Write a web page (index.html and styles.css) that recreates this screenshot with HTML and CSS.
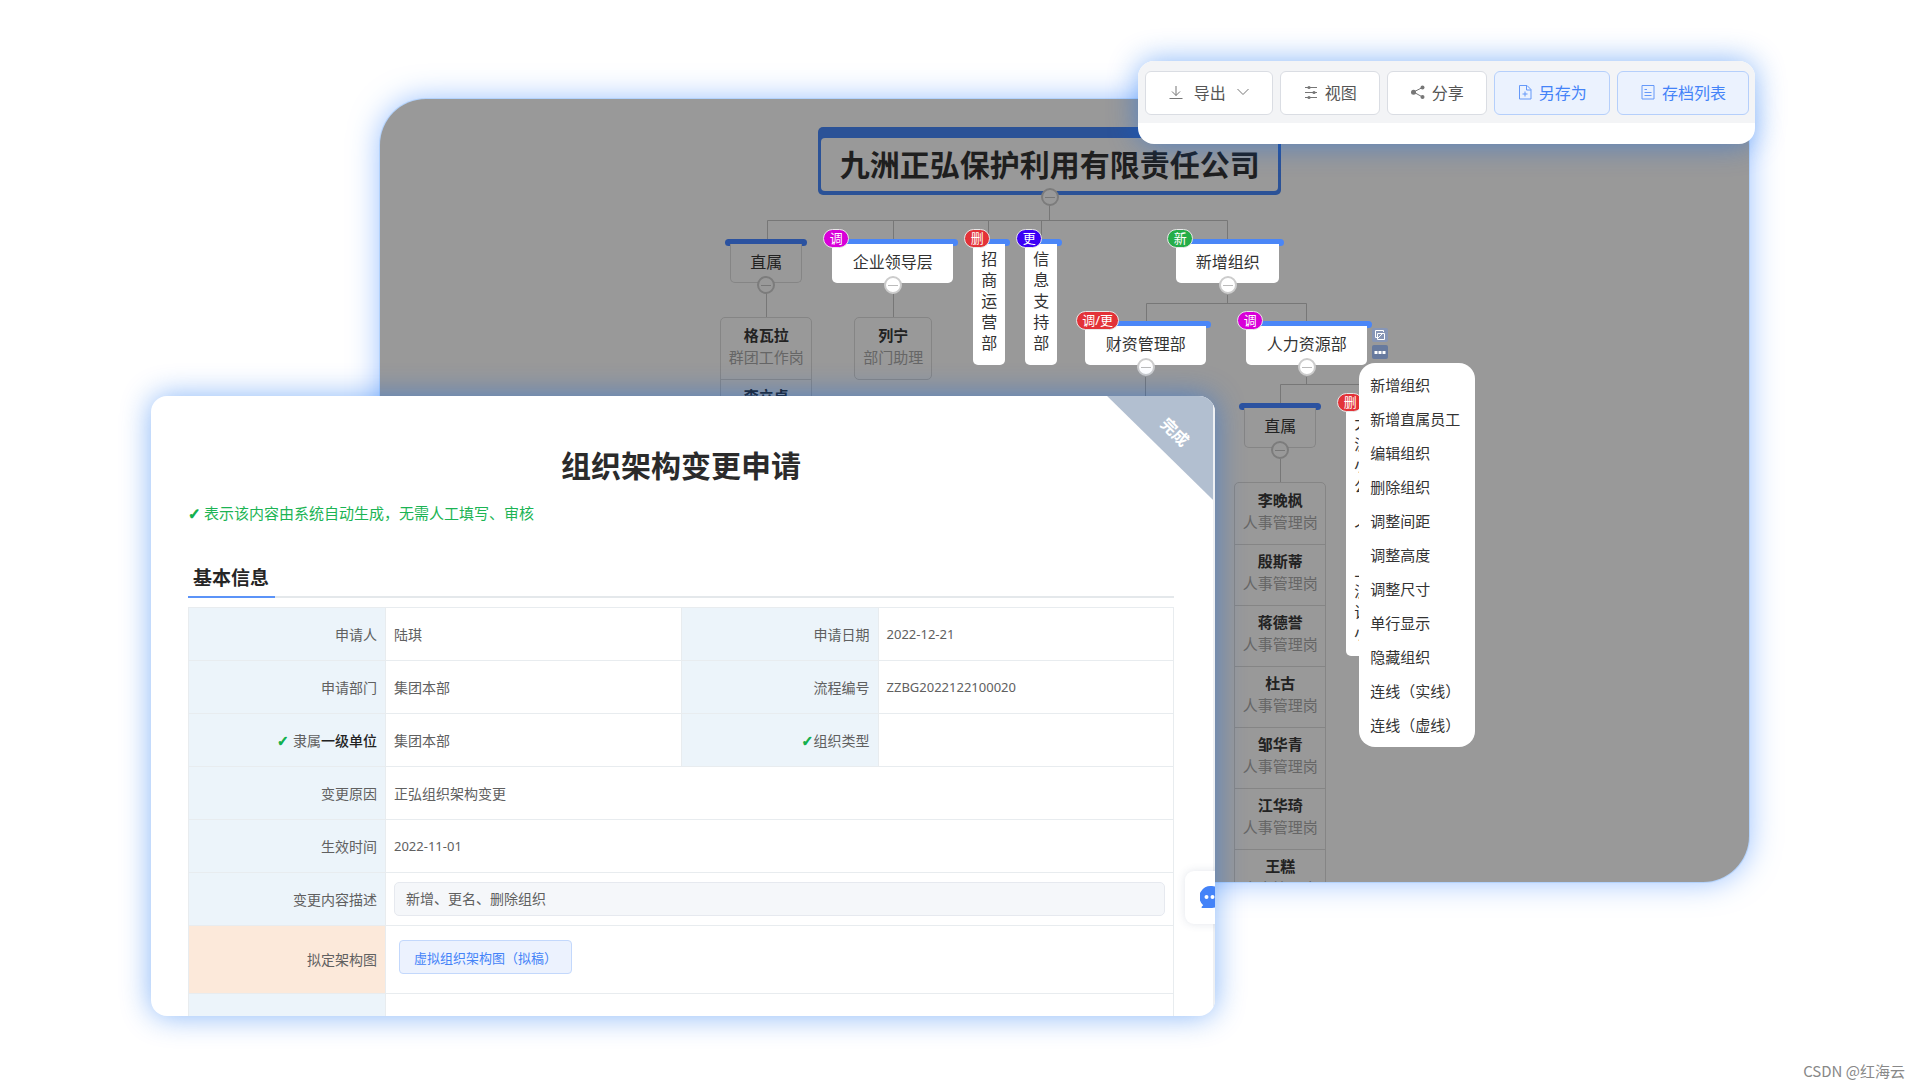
FILE: index.html
```html
<!DOCTYPE html>
<html lang="zh-CN">
<head>
<meta charset="utf-8">
<meta name="viewport" content="width=device-width, initial-scale=1">
<title>组织架构变更申请</title>
<link rel="stylesheet" href="styles.css">
</head>
<body>
<main class="stage">

  <section class="chart" aria-label="组织架构图">
    <div class="canvas">
      <svg class="wires" viewBox="0 0 1369 783" aria-hidden="true">
        <path d="M669.500 106V121M387.500 141V121.500H847.500V141M513.500 121V141M608.500 121V145M661.500 121V145M386.500 194V219M513.500 194V219M847.500 196V204M766.500 228V204.500H926.500V228M765.500 278V300M926.500 278V285M900.500 305V285.500H981M900.500 360V384"/>
      </svg>

      <div class="root"><h2>九洲正弘保护利用有限责任公司</h2><button class="toggle" aria-label="收起"></button></div>

      <div class="node dim at-direct"><div class="box">直属</div><button class="toggle" aria-label="收起"></button></div>
      <div class="node at-lead"><div class="box">企业领导层</div><span class="badge move">调</span><button class="toggle" aria-label="收起"></button></div>
      <div class="node tall at-biz"><div class="box">招商运营部</div><span class="badge del">删</span></div>
      <div class="node tall at-info"><div class="box">信息支持部</div><span class="badge ren">更</span></div>
      <div class="node at-new"><div class="box">新增组织</div><span class="badge add">新</span><button class="toggle" aria-label="收起"></button></div>
      <div class="node at-fin"><div class="box">财资管理部</div><span class="badge del">调/更</span><button class="toggle" aria-label="收起"></button></div>
      <div class="node at-hr"><div class="box">人力资源部</div><span class="badge move">调</span><button class="toggle" aria-label="收起"></button></div>
      <div class="node dim at-direct2"><div class="box">直属</div><button class="toggle" aria-label="收起"></button></div>
      <div class="node tall at-pool"><div class="box">大派小公卜个卜上派话小</div><span class="badge del">删</span></div>

      <ul class="people at-p1">
        <li><b>格瓦拉</b><span>群团工作岗</span></li>
        <li><b>李立卓</b><span>群团工作岗</span></li>
      </ul>
      <ul class="people narrow at-p2">
        <li><b>列宁</b><span>部门助理</span></li>
      </ul>
      <ul class="people at-p3">
        <li><b>李晚枫</b><span>人事管理岗</span></li>
        <li><b>殷斯蒂</b><span>人事管理岗</span></li>
        <li><b>蒋德誉</b><span>人事管理岗</span></li>
        <li><b>杜古</b><span>人事管理岗</span></li>
        <li><b>邹华青</b><span>人事管理岗</span></li>
        <li><b>江华琦</b><span>人事管理岗</span></li>
        <li><b>王糕</b><span>人事管理岗</span></li>
      </ul>

      <div class="tools">
        <button aria-label="复制"><svg viewBox="0 0 16 14"><path d="M5 9.500H3.500V2.500H11.500V4M5.500 5.500H12.500V11.500H5.500ZM6 10l4-4"/></svg></button>
        <button class="more" aria-label="更多"><svg viewBox="0 0 16 14"><path class="dots" d="M2.500 6h3v3h-3zM6.500 6h3v3h-3zM10.500 6h3v3h-3z"/></svg></button>
      </div>

      <menu class="menu">
        <li><button>新增组织</button></li>
        <li><button>新增直属员工</button></li>
        <li><button>编辑组织</button></li>
        <li><button>删除组织</button></li>
        <li><button>调整间距</button></li>
        <li><button>调整高度</button></li>
        <li><button>调整尺寸</button></li>
        <li><button>单行显示</button></li>
        <li><button>隐藏组织</button></li>
        <li><button>连线（实线）</button></li>
        <li><button>连线（虚线）</button></li>
      </menu>
    </div>
  </section>

  <section class="form">
    <h1>组织架构变更申请</h1>
    <p class="note"><span class="tick">✓</span>表示该内容由系统自动生成，无需人工填写、审核</p>
    <div class="section"><h2>基本信息</h2></div>
    <table>
      <colgroup><col class="c-label"><col class="c-value"><col class="c-label"><col class="c-value"></colgroup>
      <tbody>
        <tr><th scope="row">申请人</th><td>陆琪</td><th scope="row">申请日期</th><td class="num">2022-12-21</td></tr>
        <tr><th scope="row">申请部门</th><td>集团本部</td><th scope="row">流程编号</th><td class="num">ZZBG2022122100020</td></tr>
        <tr><th scope="row"><span class="tick">✓</span>隶属<em>一级单位</em></th><td>集团本部</td><th scope="row"><span class="tick tight">✓</span>组织类型</th><td></td></tr>
        <tr><th scope="row">变更原因</th><td colspan="3">正弘组织架构变更</td></tr>
        <tr><th scope="row">生效时间</th><td class="num" colspan="3">2022-11-01</td></tr>
        <tr><th scope="row"><label for="desc">变更内容描述</label></th><td colspan="3"><input id="desc" type="text" value="新增、更名、删除组织" readonly></td></tr>
        <tr class="plan"><th scope="row">拟定架构图</th><td colspan="3"><button class="draft">虚拟组织架构图（拟稿）</button></td></tr>
        <tr><th scope="row"></th><td colspan="3"></td></tr>
      </tbody>
    </table>
    <div class="ribbon"><span>完成</span></div>
    <button class="chat" aria-label="在线咨询">
      <svg viewBox="0 0 24 24"><path fill="#4483f8" d="M12 1a10.500 11 0 0 1 0 22H2.500c-1.200 0-1.300-1-.6-1.600l1.300-1.200A11 11 0 0 1 12 1Z"/><circle cx="6.500" cy="12" r="2" fill="#fff"/><circle cx="12.500" cy="12" r="2" fill="#fff"/><circle cx="18.500" cy="12" r="2" fill="#fff"/></svg>
    </button>
  </section>

  <nav class="toolbar" aria-label="工具栏">
    <div class="buttons">
      <button class="export">
        <svg viewBox="0 0 16 16"><path d="M8 2V11.500M4 7.500 8 11.500 12 7.500M1.500 14.500H14.500"/></svg>
        <span>导出</span>
        <svg class="chev" viewBox="0 0 14 16"><path d="M1.500 5 7 10.500 12.500 5"/></svg>
      </button>
      <button>
        <svg viewBox="0 0 16 16"><path d="M2 3.500H14M2 8.500H14M2 13.500H14"/><circle class="fill" cx="6" cy="3.500" r="1.600"/><circle class="fill" cx="11" cy="8.500" r="1.600"/><circle class="fill" cx="6" cy="13.500" r="1.600"/></svg>
        <span>视图</span>
      </button>
      <button>
        <svg viewBox="0 0 16 16"><path d="M12.500 3.500 3.500 8 12.500 13"/><circle class="fill" cx="12.500" cy="3.500" r="2"/><circle class="fill" cx="3.500" cy="8.200" r="2.500"/><circle class="fill" cx="12.500" cy="13" r="2"/></svg>
        <span>分享</span>
      </button>
      <button class="primary">
        <svg viewBox="0 0 16 16"><path d="M2.500 1.500H10L14 5.500V15H2.500ZM9.500 1.500V6H14M8 7.500V12.500M5.500 10H10.500"/></svg>
        <span>另存为</span>
      </button>
      <button class="primary">
        <svg viewBox="0 0 16 16"><path d="M2 1.500H14V15H2ZM4.500 5.500H7M4.500 8.500H11.500M4.500 11.500H11.500"/></svg>
        <span>存档列表</span>
      </button>
    </div>
  </nav>

  <footer class="credit">CSDN @红海云</footer>
</main>
</body>
</html>
```
FILE: styles.css
```css
* { box-sizing: border-box; }

body {
  margin: 0;
  background: #fff;
  color: #333;
  font-family: "Noto Sans", "Noto Sans CJK SC", sans-serif;
}

h1, h2, p, ul, menu { margin: 0; padding: 0; }
ul, menu { list-style: none; }
button, input { font: inherit; color: inherit; margin: 0; padding: 0; }
button { cursor: pointer; }

.stage {
  position: relative;
  min-height: 100vh;
  overflow: hidden;
}

/* Overlapping windows */
.chart, .form, .toolbar { position: absolute; }

.chart {
  left: 19.8%;
  right: 8.9%;
  top: 99px;
  height: 783px;
  overflow: hidden;
  border-radius: 46px;
  background: #999;
  box-shadow: 0 0 0 1px rgba(160, 200, 250, .6), 0 0 30px rgba(50, 130, 255, .5);
}

.canvas {
  position: relative;
  width: 1369px;
  height: 783px;
  margin: 0 auto;
}

.wires {
  position: absolute;
  inset: 0;
  width: 1369px;
  height: 783px;
  fill: none;
  stroke: #777;
}

.root {
  position: absolute;
  left: 438px;
  top: 28px;
  width: 463px;
  height: 68px;
  border-radius: 5px;
  background: #2b5297;
  padding: 11px 3px 4px;
}
.root h2 {
  border-radius: 4px;
  background: #999;
  color: #1f1f1f;
  font-size: 30px;
  line-height: 53px;
  text-align: center;
}

.node { position: absolute; font-size: 16px; }
.node::before {
  content: "";
  position: absolute;
  top: -5px;
  left: -5px;
  right: -5px;
  height: 7px;
  border-radius: 4px;
  background: #4a86f7;
}
.box {
  position: relative;
  height: 100%;
  display: flex;
  align-items: center;
  justify-content: center;
  padding-bottom: 5px;
  border-radius: 0 0 5px 5px;
  background: #fff;
}
.tall .box {
  padding: 5px 8px 0;
  align-items: flex-start;
  line-height: 21px;
  word-break: break-all;
}
.dim::before { background: #2b52a0; }
.dim .box {
  border: 1px solid #858585;
  border-top: 0;
  background: #999;
  color: #222;
}

.at-direct { left: 350px; top: 145px; width: 72px; height: 39px; }
.at-lead { left: 452px; top: 145px; width: 121px; height: 39px; }
.at-biz { left: 593px; top: 145px; width: 32px; height: 121px; }
.at-info { left: 645px; top: 145px; width: 32px; height: 121px; }
.at-new { left: 796px; top: 145px; width: 103px; height: 39px; }
.at-fin { left: 705px; top: 227px; width: 121px; height: 39px; }
.at-hr { left: 866px; top: 227px; width: 121px; height: 39px; }
.at-direct2 { left: 864px; top: 309px; width: 72px; height: 40px; }
.at-pool { left: 966px; top: 309px; width: 32px; height: 248px; }
.at-p1 { left: 340px; top: 218px; }
.at-p2 { left: 474px; top: 218px; }
.at-p3 { left: 854px; top: 383px; }

.badge {
  position: absolute;
  left: -9px;
  top: -15px;
  min-width: 26px;
  padding: 0 5px;
  border: 1px solid #e8e8e8;
  border-radius: 10px;
  color: #fff;
  font-size: 13px;
  line-height: 17px;
  text-align: center;
  white-space: nowrap;
}
.move { background: #d800d8; }
.del { background: #e33238; }
.ren { background: #3c00f5; }
.add { background: #25ad48; }

.toggle {
  position: absolute;
  left: 50%;
  bottom: -11px;
  width: 18px;
  height: 18px;
  margin-left: -9px;
  border: 2px solid #ccc;
  border-radius: 50%;
  background: #fff linear-gradient(#bbb, #bbb) center / 10px 1px no-repeat;
}
.dim .toggle, .root .toggle {
  border-color: #7c7c7c;
  background: #999 linear-gradient(#777, #777) center / 10px 1px no-repeat;
}

.people {
  position: absolute;
  width: 92px;
  border: 1px solid #858585;
  border-radius: 5px;
  font-size: 15px;
}
.people.narrow { width: 78px; }
.people li {
  height: 61px;
  display: flex;
  flex-direction: column;
  align-items: center;
  padding-top: 6px;
  line-height: 22px;
}
.people li + li { border-top: 1px solid #858585; padding-top: 5px; }
.people b { color: #222; }
.people span { color: #666; }

.tools {
  position: absolute;
  left: 992px;
  top: 229px;
  display: grid;
  gap: 3px;
}
.tools button {
  display: block;
  width: 16px;
  height: 14px;
  border: 0;
  border-radius: 2px;
  background: #8796b6;
}
.tools .more { background: #677a9e; }
.tools svg { display: block; width: 16px; height: 14px; fill: none; stroke: #fff; }
.tools .dots { fill: #fff; stroke: none; }

.menu {
  position: absolute;
  left: 979px;
  top: 264px;
  width: 116px;
  padding: 4px 0 6px;
  border-radius: 16px;
  background: #fff;
}
.menu button {
  display: block;
  width: 100%;
  height: 34px;
  padding-left: 11px;
  border: 0;
  background: none;
  font-size: 15px;
  text-align: left;
  white-space: nowrap;
}

/* Application form */
.form {
  left: 7.865%;
  top: 396px;
  width: 55.42%;
  height: 620px;
  overflow: hidden;
  padding: 47px 41px 0 37px;
  border-radius: 16px;
  background: #fff;
  box-shadow: 0 0 30px rgba(0, 100, 240, .48);
}
.form::after {
  content: "";
  position: absolute;
  top: 0;
  right: 0;
  width: 2px;
  height: 100%;
  background: #eef0f3;
}
.form h1 {
  color: #2b2b2b;
  font-size: 30px;
  line-height: 46px;
  text-align: center;
}
.note {
  margin-top: 14px;
  color: #1cb454;
  font-size: 15px;
  line-height: 20px;
}
.tick {
  display: inline-block;
  width: 16px;
  color: #10b04c;
  font-family: "DejaVu Sans", sans-serif;
  -webkit-text-stroke: 1px currentColor;
  text-align: left;
}
.tick.tight { width: 12px; }

.section {
  margin-top: 37px;
  border-bottom: 2px solid #e4e8eb;
}
.section h2 {
  width: 87px;
  margin-bottom: -2px;
  border-bottom: 2px solid #5b93f8;
  padding: 0 5px 1px;
  color: #262626;
  font-size: 19px;
  line-height: 34px;
  white-space: nowrap;
}

table {
  width: 100%;
  margin-top: 9px;
  border-collapse: collapse;
  table-layout: fixed;
  color: #606060;
  font-size: 14px;
}
.c-label { width: 20%; }
.c-value { width: 30%; }
th, td {
  height: 53px;
  padding: 0 8px 1px;
  border: 1px solid #e8ecef;
}
th {
  background: #ecf4fa;
  font-weight: normal;
  text-align: right;
}
th em { color: #222; font-style: normal; font-weight: 500; }
.num { font-size: 13px; }

#desc {
  display: block;
  width: 100%;
  height: 34px;
  padding: 0 11px 1px;
  border: 1px solid #e6e9ef;
  border-radius: 5px;
  background: #f5f7fa;
}
.plan th, .plan td { height: 68px; }
.plan th { background: #fce9da; }
.draft {
  display: block;
  height: 34px;
  margin: 0 0 4px 5px;
  padding: 0 14px;
  border: 1px solid #c3d8fc;
  border-radius: 4px;
  background: #ecf2fe;
  color: #4483f8;
  font-size: 13px;
}

.ribbon {
  position: absolute;
  top: 0;
  right: 2px;
  width: 106px;
  height: 104px;
  clip-path: polygon(0 0, 100% 0, 100% 100%);
  background: #b2bfd0;
}
.ribbon span {
  position: absolute;
  right: 22px;
  top: 24px;
  color: #fff;
  font-size: 16px;
  font-weight: bold;
  line-height: 24px;
  transform: rotate(45deg);
}

.chat {
  position: absolute;
  z-index: 1;
  top: 475px;
  right: -24px;
  width: 54px;
  height: 53px;
  border: 0;
  border-radius: 9px;
  background: #fff;
  box-shadow: 0 0 8px rgba(60, 80, 120, .15);
}
.chat svg { display: block; width: 24px; height: 24px; margin: 0 auto 2px; }

/* Toolbar */
.toolbar {
  top: 61px;
  right: 8.6%;
  overflow: hidden;
  border-radius: 16px;
  background: #fff;
  padding-bottom: 21px;
  box-shadow: 0 0 30px rgba(0, 100, 240, .48);
}
.buttons {
  display: flex;
  gap: 7px;
  padding: 10px 6px 8px 7px;
  background: #f3f4f6;
}
.buttons button {
  display: flex;
  align-items: center;
  gap: 6px;
  height: 44px;
  padding: 0 22px 2px;
  border: 1px solid #dadde3;
  border-radius: 6px;
  background: #fff;
  color: #555;
  font-size: 16px;
  white-space: nowrap;
}
.buttons .export { gap: 10px; }
.buttons .primary {
  border-color: #b5cffb;
  background: #ebf2fe;
  color: #4483f8;
}
.buttons svg {
  width: 16px;
  height: 16px;
  fill: none;
  stroke: currentColor;
  opacity: .8;
}
.buttons .chev { width: 14px; }
.buttons .fill { fill: currentColor; stroke: none; }

.credit {
  position: absolute;
  right: 15px;
  bottom: 7px;
  color: #888;
  font-family: "Noto Sans CJK SC", sans-serif;
  font-size: 15px;
  line-height: 22px;
}
```
